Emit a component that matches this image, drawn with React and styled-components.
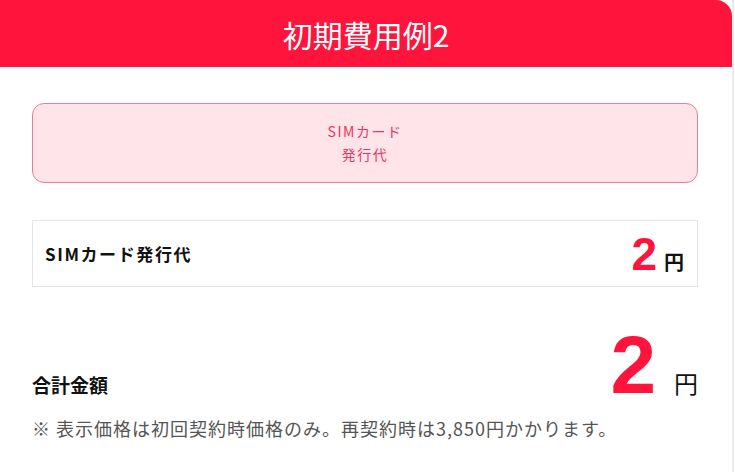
import styled, { createGlobalStyle } from "styled-components";

const GlobalStyle = createGlobalStyle`
  body {
    margin: 0;
    background: #fff;
    font-family: "Noto Sans CJK JP", "Noto Sans", sans-serif;
  }
`;

const Card = styled.div`
  width: 734px;
  box-sizing: border-box;
  border-right: 2px solid #ececec;
  min-height: 472px;
`;

const Header = styled.div`
  height: 67px;
  background: #ff143c;
  border-top-right-radius: 16px;
  color: #fff;
  display: flex;
  align-items: center;
  justify-content: center;
  font-size: 30px;
  font-weight: 400;
`;

const Body = styled.div`
  padding: 36px 34px 0 32px;
`;

const Badge = styled.div`
  height: 80px;
  box-sizing: border-box;
  border: 1px solid #ea7d9c;
  border-radius: 12px;
  background: #ffe4ea;
  color: #e8365f;
  display: flex;
  flex-direction: column;
  align-items: center;
  justify-content: center;
  font-size: 14px;
  line-height: 23px;
  letter-spacing: 1.5px;
`;

const ItemRow = styled.div`
  margin-top: 37px;
  height: 67px;
  box-sizing: border-box;
  border: 1px solid #e6e6e6;
  display: flex;
  align-items: center;
  justify-content: space-between;
  padding: 0 13px 0 12px;
`;

const ItemLabel = styled.div`
  font-size: 17px;
  font-weight: 700;
  color: #111;
  letter-spacing: 1.6px;
`;

const Price = styled.div`
  display: flex;
  align-items: baseline;
  gap: ${p => p.$gap}px;
`;

const Amount = styled.span`
  font-family: "Liberation Sans", Arial, sans-serif;
  font-weight: 700;
  color: #ff143c;
  font-size: ${p => p.$size}px;
  line-height: 1;
`;

const Yen = styled.span`
  font-size: ${p => p.$size}px;
  font-weight: ${p => p.$weight};
  color: #111;
  line-height: 1;
`;

const TotalRow = styled.div`
  margin-top: 37px;
  display: flex;
  align-items: baseline;
  justify-content: space-between;
`;

const TotalLabel = styled.div`
  font-size: 19px;
  font-weight: 700;
  color: #111;
`;

const Note = styled.p`
  margin: 9px 0 0;
  font-size: 18px;
  color: #555;
  letter-spacing: 1px;
`;

export default function App() {
  return (
    <>
      <GlobalStyle />
      <Card>
        <Header>初期費用例2</Header>
        <Body>
          <Badge>
            <span>SIMカード</span>
            <span>発行代</span>
          </Badge>
          <ItemRow>
            <ItemLabel>SIMカード発行代</ItemLabel>
            <Price $gap={7}>
              <Amount $size={46}>2</Amount>
              <Yen $size={20} $weight={700}>円</Yen>
            </Price>
          </ItemRow>
          <TotalRow>
            <TotalLabel>合計金額</TotalLabel>
            <Price $gap={18}>
              <Amount $size={82}>2</Amount>
              <Yen $size={24} $weight={400}>円</Yen>
            </Price>
          </TotalRow>
          <Note>※ 表示価格は初回契約時価格のみ。再契約時は3,850円かかります。</Note>
        </Body>
      </Card>
    </>
  );
}
